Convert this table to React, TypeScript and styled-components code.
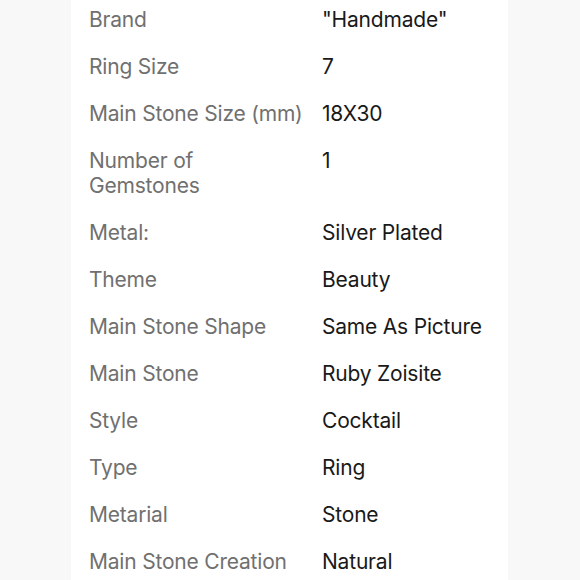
import React from "react";
import styled, { createGlobalStyle } from "styled-components";

const Global = createGlobalStyle`
  html, body { margin: 0; padding: 0; background: #f8f8f8; overflow: hidden; }
  body { font-family: Inter, "Noto Sans", sans-serif; }
`;

const Page = styled.div`
  width: 580px;
  height: 580px;
  display: flex;
  justify-content: flex-start;
  overflow: hidden;
`;

const Card = styled.div`
  margin-left: 71px;
  width: 437px;
  background: #ffffff;
  padding: 0 0 0 18px;
  box-sizing: border-box;
`;

const List = styled.dl`
  margin: -4px 0 0 0;
  display: grid;
  grid-template-columns: 233px 1fr;
`;

const Label = styled.dt`
  margin: 0;
  padding: 11px 19px 11px 0;
  font-size: 21px;
  line-height: 25px;
  color: #707070;
  letter-spacing: -0.2px;
`;

const Value = styled.dd`
  margin: 0;
  padding: 11px 0;
  font-size: 21px;
  line-height: 25px;
  color: #191919;
  letter-spacing: -0.2px;
`;

const rows: [string, string][] = [
  ["Brand", "\"Handmade\""],
  ["Ring Size", "7"],
  ["Main Stone Size (mm)", "18X30"],
  ["Number of Gemstones", "1"],
  ["Metal:", "Silver Plated"],
  ["Theme", "Beauty"],
  ["Main Stone Shape", "Same As Picture"],
  ["Main Stone", "Ruby Zoisite"],
  ["Style", "Cocktail"],
  ["Type", "Ring"],
  ["Metarial", "Stone"],
  ["Main Stone Creation", "Natural"],
];

export default function App() {
  return (
    <>
      <Global />
      <Page>
        <Card>
          <List>
            {rows.map(([k, v]) => (
              <React.Fragment key={k}>
                <Label>{k}</Label>
                <Value>{v}</Value>
              </React.Fragment>
            ))}
          </List>
        </Card>
      </Page>
    </>
  );
}
